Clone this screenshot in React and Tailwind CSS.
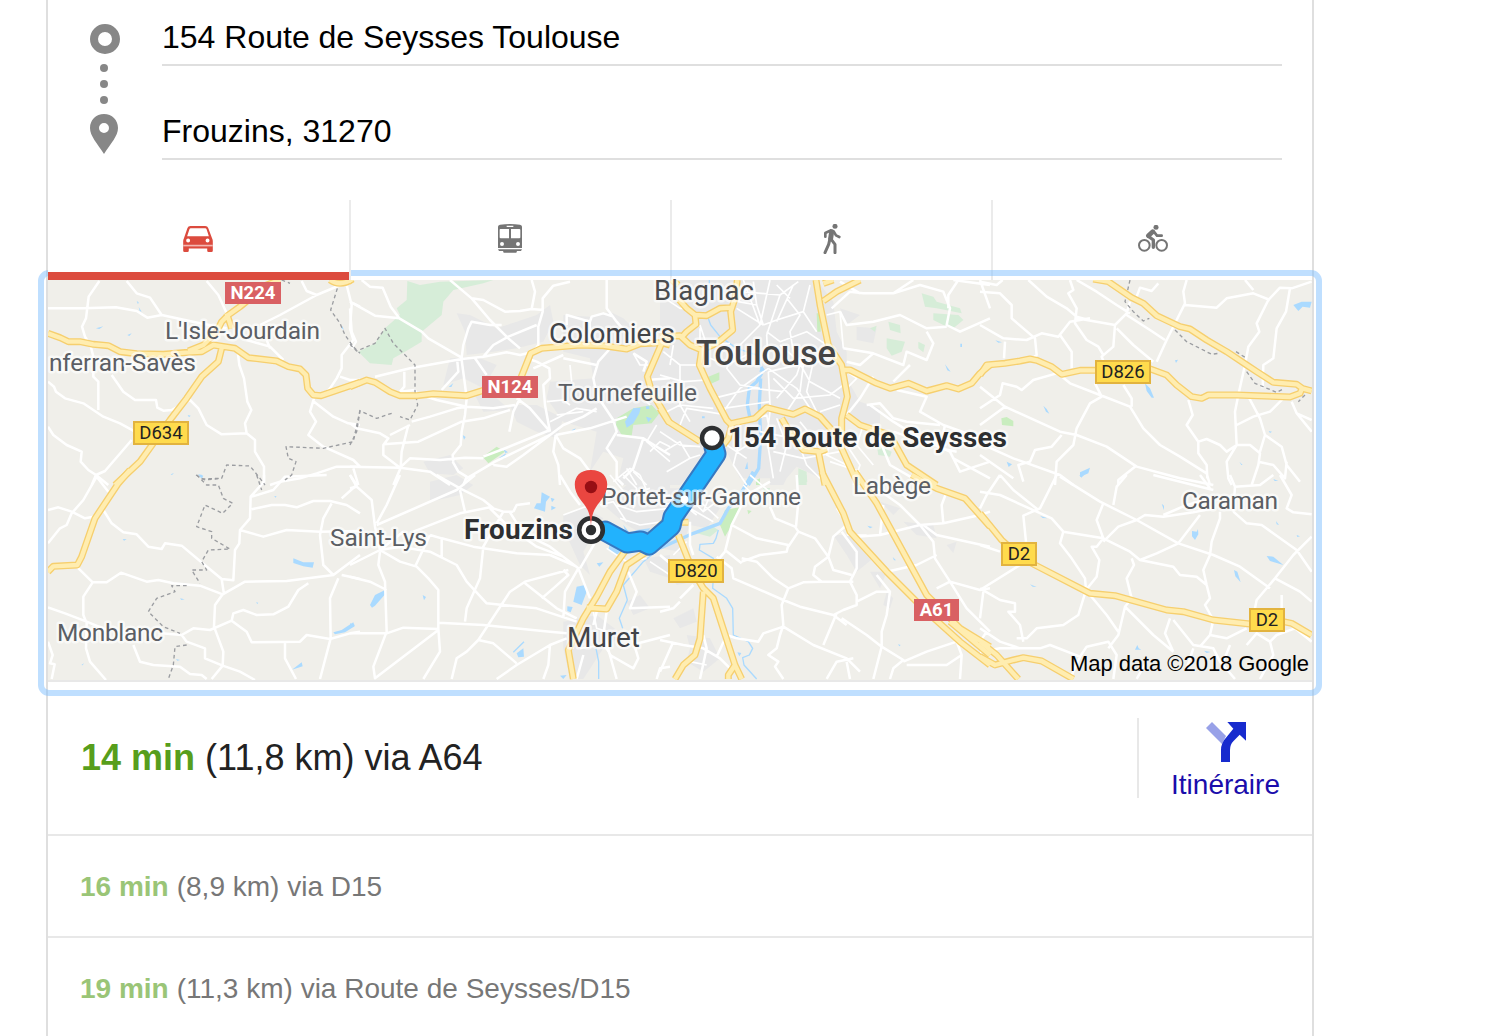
const sans = "font-['Liberation_Sans',Arial,sans-serif]";

// The map is cut in tiles. Every tile holds its own paths, drawn at three times
// the size of the page, and x / y give its top left corner.
const tiles = [
  {
    x: 40,
    y: 265,
    roads:
      "M24 130H130L228 127L290 138L322 158L365 150L480 175L560 190M178 48L146 95L138 160L126 185L135 215L152 243L160 275V335L175 350V435M260 48L290 85L330 98L365 150M500 48L535 90L560 145M660 180L720 150L830 90L930 48M785 48L800 78L830 90M24 350L42 365L48 380L75 400L130 415L190 455L240 475L285 500M215 330L250 380L285 405H348L352 428L370 437L395 435L450 405L475 430L500 480L545 508L620 505L645 525V560L672 605V660M24 485L40 510L80 540L125 560L122 590L145 615L168 630L205 660M155 660L168 630L195 618L275 525M592 250L598 300L612 340L622 410L634 435L615 475L620 505M620 225L690 245L730 285M680 225L690 250M920 60L935 120L930 190L940 225L905 270V310L890 340L870 370L850 390M900 335L930 345H960M940 115L960 125M822 400L810 440L828 470L805 510L850 545L940 585L960 605M822 410L880 455L925 475L960 480M690 660L720 650L780 640L830 625L890 605H960M940 610L955 660",
    main:
      "M24 205L60 218L85 230H120L160 238L205 242L240 260L290 266L370 268L445 262L485 260L520 240L585 250L625 278L710 288L745 305L780 312L798 330L803 370L820 390L843 392L960 352M445 258L490 240L530 200L545 170L565 150L600 125L680 60L720 45M560 145L575 190M545 250L535 290L485 335L440 400L390 465L300 590L225 660M870 45Q900 66 938 42",
    border:
      "M892 70L872 135L900 175L915 210L940 245L960 265M960 435L940 530L850 550L738 545L745 580L768 590L755 630L735 645M468 630L495 645L545 640L560 600L630 603L660 640L675 660M725 45L750 55",
    water:
      "M290 108L296 112L294 118ZM296 126L305 140L299 138ZM168 190L190 184L178 192ZM262 210L275 205L268 213ZM443 450L452 452L447 457ZM392 628L402 624L396 630ZM474 628L488 630L484 640ZM906 182L912 195L905 190Z",
  },
  {
    x: 350,
    y: 265,
    urban:
      "M320 145L360 150L440 190L500 170L560 150L600 120L610 170L580 230L500 250L430 260L350 270L345 200ZM300 280L380 275L440 300L400 370L340 340L280 360ZM370 380L440 400L480 435L400 440ZM480 420L560 420L640 460L620 520L560 500L500 470ZM640 150L720 155L780 140L820 160L860 200L960 260V660H800L820 580L760 560L720 620L740 500L640 470L590 400L600 350L730 340L720 280L640 260ZM220 590L300 570L340 610L310 630L240 625Z",
    wood:
      "M172 48L210 60L270 50L430 45L400 55L310 75L280 110L275 150L215 200V230L165 260L130 280L125 300L60 295L25 260L75 235L105 190L150 150L140 130L170 105Z",
    park:
      "M800 460L850 430L905 420L928 445L905 475L850 480L845 512L815 510L798 480ZM398 575L440 545L465 560L415 595Z",
    water:
      "M825 470L850 430L872 428L868 445L850 475L830 488ZM888 455L905 460L895 472ZM888 424H898V432H888ZM446 580L468 565L462 582ZM460 552L474 562L466 564ZM296 366L310 354L304 366ZM664 496L678 490L670 499ZM338 510L347 516L342 524Z",
    roads:
      "M0 110L75 152L148 160M35 45L60 65L98 68L122 125L148 160L215 200L235 220L335 278M0 130L5 200L18 230L5 250M75 335L180 310L335 282L400 275L470 262L510 270L545 262M300 45L365 100L420 165L475 220L510 250M365 100L400 105L465 140L510 138L545 132L580 135M545 45L555 80L545 132M660 50L610 62L578 100V140L565 185V240L550 260M335 278L340 240L355 190L365 170L420 180L455 180M400 275L430 240L475 215L560 180M335 285L345 360L350 400L345 450L335 500L332 540L308 570L310 590M322 290L325 320L275 375M375 280L410 330M163 320V365L150 380M150 380L195 375L200 385L260 405L350 425L430 430L495 420M510 400L490 440L478 500M350 425L320 430L240 455L185 470M0 475L20 490L90 505L115 520L100 540V570L150 608M120 510L180 480M100 538L205 530L335 470L400 460L480 435M175 480L155 560L152 608L130 660M0 605L150 608L180 580L270 585L345 578L400 580M150 608L240 620L300 660M600 500L540 430L500 400M350 640L435 590L600 510L640 480L700 455L740 430M340 660L350 635L325 620L308 590M600 500L585 420L580 360L600 340L598 310L560 290L545 285M430 600L470 605L520 570L600 510M400 575L460 552L600 495M617 510L720 490L830 455M617 510L610 560L625 600L630 660M617 510L640 550L690 580L720 620M770 45V130L800 170L830 205M650 180V150L720 170L725 155L760 145L790 155M790 240L745 290L730 340L740 390L790 465M640 280L740 300M550 310L640 270M850 265L890 290L880 320M890 345L960 340M790 465L800 500L770 550L800 590V640L820 660M800 510L880 520L960 570M880 520L850 610L820 640",
    streets:
      "M660 300L665 350M720 170L722 205M590 410L640 405L660 420M600 470L680 430L740 440M620 450L700 440M850 265L870 300L895 300M900 560L930 530L960 545M830 610L860 660M850 620L890 660M790 650L840 610L870 630M900 345L880 400L900 420M920 480L890 530L960 590",
    main:
      "M0 365L50 345L75 352L120 380L150 392H200L250 386L350 392L400 376M512 340L530 295L542 265L575 250L690 240L760 242L830 252L870 236L960 232M-5 50L5 42M935 235L892 335L905 380L960 475",
    border:
      "M0 238L20 258L75 235L105 190L130 235L160 265L195 300V380L203 420L180 465L150 455M125 445L80 460L30 438L20 500L0 540",
  },
  {
    x: 660,
    y: 265,
    urban:
      "M0 45H470L520 110L530 200L560 260V340L600 410L660 430V475L610 480L560 440L540 480L500 560L440 570L380 640H240L200 560L120 600L60 660H0ZM590 185L650 190L640 235L590 225ZM540 130L600 150L560 180ZM330 560L480 550V640L400 600L370 660H330Z",
    wood:
      "M785 85L820 95L830 110L900 130L905 145L830 130L795 125ZM820 145L895 150L910 165L880 190L850 180L820 165ZM685 170L720 180L722 205L690 195ZM680 220L735 230L725 260L695 272L680 250ZM775 230L795 240L790 262L775 250ZM630 190L650 182L645 200ZM415 610L440 620L440 660H415ZM650 540L695 560L690 575L655 570ZM735 600L755 595L745 612Z",
    park: "M470 145H482V200H472ZM145 335L178 322L178 345L150 358ZM288 645L300 640V660H288Z",
    water:
      "M855 298L872 320L862 316ZM901 236H906V246H901ZM126 454H134V460H126ZM298 320L305 300L318 320ZM255 612L262 590L264 612Z",
    river: "M148 45V110M143 155L152 180L180 215L230 250L290 270L305 315",
    riverWide: "M305 325L290 350L268 370L262 420L272 470M302 340L298 420L302 520L296 610L265 660",
    roads:
      "M515 130L570 80L610 85H700L760 45M540 50L600 85M700 85L780 60L850 80L870 130L860 180L900 200L990 160M895 45L865 90V130M540 140L560 180L640 170L720 150L800 190L860 185M550 250L640 265L730 300L740 260L800 285L820 235L800 200M640 265L600 300L560 290M640 335L600 400L560 450M710 375L800 395L780 440L850 480L990 530M630 420L700 470L780 520L870 560L900 620L990 590M880 45L990 60M960 45L990 130M700 500L760 520L860 540M640 480L690 600L760 640M750 300L700 350M855 480L840 550L890 560M620 420L660 415L700 460L740 470L840 480M870 560L880 580L990 640",
    streets:
      "M250 45L300 180M280 50L290 120L310 180M330 45L300 180M415 50L360 90L330 180L320 210M400 60L350 170M430 140L350 165L310 180M230 130L310 180M245 80L360 90M260 70L235 110L290 120M240 240L300 180M320 200L360 230L440 200L500 240M380 100L420 150L390 200L400 260M450 60L430 140L470 200M350 60L390 100M320 210L325 300M325 310L240 370L190 440M325 310L410 370L450 430M325 320L330 420M400 260L450 350L540 400M325 320L460 290L530 290M360 240L430 300L420 380L380 440M260 270L200 300L150 280M230 240L200 310L240 360L300 370M160 400L280 370L370 380M190 430L260 420L330 410M340 340L400 400L510 390L550 360M440 240L410 330L350 400M460 290L440 380L470 440M0 90L60 130L90 130M10 260L60 300L120 300M0 330L70 350L140 345M40 240L30 300M60 300L60 420L90 470M20 440L60 420L160 430M120 190V230M120 180L140 240L210 235M60 480L80 430L140 440L200 450M0 500L60 540L120 545M10 560L60 530L90 580M20 620L90 580L120 570M240 480L320 450L330 500L230 560M330 440L320 520L340 640M350 460L380 540L360 620M300 500L400 520L440 500L530 500M400 490L440 600L480 640M340 560L430 580L540 560M520 490L500 570L560 600M560 540L600 600L580 660M420 470L460 520L470 560M480 440L540 420M560 320L590 340L560 370M500 150L540 140L550 250M240 520L220 600L260 660M200 540L260 580M510 590L600 620M610 480L590 540L640 600",
    main:
      "M35 45L55 60M58 105L80 130L105 150L108 178L80 200L62 220M105 150L140 152L180 130L215 128M232 45L225 100L212 140L218 195L170 235L130 252M0 232L30 240M0 215L60 212L90 240L125 255L118 300L150 370L200 465L215 480L205 520L190 540M215 475L285 460L320 428L400 448L435 432L480 455L520 500L545 550L595 660M468 45L480 120L505 240L545 300L562 395L545 460V550M490 108L530 80L600 45M490 55L520 45M550 315H570L650 355L690 370L745 355L800 378L860 362L895 372L935 355L960 325L990 300M560 450L600 480L690 510L740 600L830 660M365 460L400 520L430 555L480 560L500 552M475 560L495 660M0 430L25 470L120 530",
  },
  {
    x: 980,
    y: 265,
    roads:
      "M0 80L60 85L95 120V160L165 220L170 270L150 285M68 45L50 60L0 50M145 45L200 95L260 130L290 155L325 165M270 45L280 75L265 85L290 130L285 175L320 225L355 245L370 270M290 45L350 80L410 120L450 145M450 110L440 145L405 180L290 160M0 180L70 220L140 225L185 205L235 215L270 170L330 160M75 230L72 280M240 210L275 260V310M535 55L515 78L480 68L470 95M405 180L400 245L365 275L375 300M410 190L460 240L520 290M440 150L510 195L555 225M620 45L610 80L615 115L590 165L560 225L530 290M615 120L710 128L740 100L820 85L870 105M795 45L820 75M995 50L935 70L900 68L865 105L830 175L838 200L805 245L795 300L775 390L765 440L770 540L740 590L745 640L755 660M930 70L918 140L890 190L880 280L850 300L848 370M0 430L60 390L68 355L110 365L125 375L160 345L230 325M240 330L270 355L360 390L450 425L490 490L540 540L600 575L680 625L690 660M345 355L365 395L330 415L290 490L280 540L230 590L225 660M430 360L455 400V425M0 365L75 425L240 500L290 510L380 545L470 605L600 640L700 660M75 425L0 480M245 510L215 545L165 555L150 590L115 600L130 650M0 535L100 580L240 630L280 660M0 570L100 640M465 605L415 645V660M625 405L638 450L620 480L655 530V565L680 600L682 640M655 530L680 522L720 540L740 560L770 540H810L840 565L835 600L815 660M808 400L840 460L855 510L905 545L920 600L960 650M770 480L820 455L870 440L910 400M935 410L950 445L995 500M950 445L995 465M855 510L840 560M835 590L880 600L915 640L920 590",
    main:
      "M0 330L20 300L75 295L120 288L150 282L170 286L215 305L245 328L300 316H350M505 310L560 330L590 360L635 395L665 400L685 390L770 390L930 396L960 385L966 370L995 378M340 42L385 50L455 98L490 115L530 152L600 185L630 192L680 225L740 260L800 300L830 320L880 352L950 358L970 372",
    border:
      "M450 45L435 110L460 140L490 168L508 160M585 195L620 230L695 268L715 265M768 260L800 280M800 320L825 355L890 382L910 372M975 390L955 410",
    park: "M64 460L80 456L100 468V484L66 480Z",
    water:
      "M940 120L965 110H995L990 128L968 125L955 138ZM495 355L510 370L522 398L515 398L500 378ZM190 422L200 432L208 446L198 440ZM80 590L96 598L86 606ZM300 622L330 608L325 625L300 636ZM585 286L594 284L588 294ZM46 226L66 232L55 233ZM582 414L592 420ZM778 590L788 600L784 600ZM866 498L876 500L870 504ZM880 642L895 648L884 648Z",
  },
  {
    x: 40,
    y: 475,
    roads:
      "M24 105L55 97L95 110L135 130L160 125M24 205L60 160L80 150L95 115L130 75L170 5L205 50M190 105L215 145L250 172L290 178L325 215L365 222L375 205L425 212L480 258L545 312L580 316L585 225L598 205L600 165L630 130L632 65L672 20V0M635 65L700 45L735 5L860 0M635 103L695 90L735 90L770 97L820 78H870L920 90L960 115M600 165L670 185L740 165L840 170L960 168M110 275L158 322L200 322L243 293L320 320L355 315L400 325L480 332L548 358L615 320L740 318L880 300L960 240M158 322L130 365V420L140 445L138 520L150 560L198 615M24 397L75 415L140 440L200 465M280 510L300 560L340 570L420 575L450 597L485 600L500 612M548 358L525 390L522 455L550 530L548 572L515 612M545 312L552 358M365 475L425 480L460 460L510 465L575 437L580 415L610 405L650 420L700 418L745 395L775 345L805 325M425 480L440 500L495 520V550L548 572L600 590L645 615M575 437L620 470L635 502L780 500L800 480L870 492L930 475L960 470M735 505V550L768 612M875 85L850 130L840 180L850 270L880 300M895 310L870 370L872 490L840 612M905 300L930 305L960 312M24 500L38 540L30 565L44 568L35 612M930 0L950 30L905 70",
    main: "M24 290L40 274L112 270L125 245L165 130L235 25L270 -15",
    border:
      "M470 0L500 30L535 30L550 70L578 85L548 115L495 90L470 155L515 170V190L570 222L505 225L485 260L500 285L455 285L480 325M440 332L395 332L405 350L350 370L325 410L370 455L420 475M440 510L405 515L400 570L385 612M650 0L665 45M485 12L540 10",
    water:
      "M760 250L790 262L822 262L818 278L790 274L760 264ZM880 472L905 465L940 442L944 454L915 472L885 478ZM756 584L785 562L788 574ZM248 192L260 193L252 197ZM420 370L434 373L424 375ZM703 63L710 64L706 68ZM648 382L655 383L652 387ZM408 552L420 555L412 557ZM124 570L132 565L128 571ZM476 2L490 2L486 10Z",
  },
  {
    x: 350,
    y: 475,
    urban:
      "M240 20L320 0L370 30L330 60L240 80ZM640 120L700 95L760 130L740 160L700 230L720 300L690 270L640 160ZM760 90L830 30L960 20V140L900 190L830 150ZM640 440L740 420L820 480L760 520L700 612H660L640 520ZM830 380L870 360L900 400L850 420ZM880 250L960 240V310L900 290Z",
    water:
      "M575 52L600 65L588 80L585 110L552 100L560 85H572ZM602 68L614 72L606 82ZM604 92L618 98L604 106ZM680 335L705 330L710 350L695 390L670 380ZM652 394L668 396L662 412L652 408ZM60 390L75 360L105 345L108 355L75 392L66 398ZM500 535L520 520L522 545L505 547ZM0 445L15 450L0 460ZM218 360L228 366L222 376ZM630 602L650 600L640 612ZM780 205L830 215L800 240L775 225ZM820 150L840 175L860 165L900 160L890 185L850 180L830 180ZM740 265L760 262L748 275Z",
    river: "M960 195L880 260L820 330L832 375L808 430L818 460M738 520L746 560V612M490 532L522 500",
    roads:
      "M0 40L20 35L65 75L75 155L90 225M0 0L20 35M150 0L110 90L80 145M90 225L160 170M80 150L320 45L375 0M260 0L330 40L400 75L430 100M0 270L90 225L150 260L200 275L235 310L265 345V460L270 530L220 612M90 225L150 215L240 230L320 270L350 320L410 385L560 400L680 440M90 230L85 270L105 320L110 470L70 575L75 610L265 465M0 305L60 320L110 345M0 475H110L160 458L265 462M240 180L275 190V245M275 190L370 215L500 235L600 240M240 180L195 275M190 170L330 115L420 97L460 110H490M460 110L400 215L390 310L350 400L345 440M330 45L345 110M265 443L400 450L600 470L650 475M655 285L525 320L480 350L385 495L350 530L320 550L305 612M525 325L620 400L680 430M480 112L520 175L600 215L685 280L720 370M420 100L470 150L560 215L640 245M490 110L500 90L540 85M685 280L645 350L640 430M650 490L600 510L595 570L580 612M575 370L610 340L655 300L640 285M600 240L680 275M385 495L430 505L500 565M440 612L500 570L600 510M760 160L690 280M630 0L660 50L690 90M835 290L860 350L840 400L960 395M740 410L730 450M770 410L760 480L780 540L850 580L865 550L850 500L865 505L960 480M760 470L800 612M700 540L680 612M920 612L930 580L960 575",
    streets:
      "M780 0L830 60L900 40M800 90L860 110L960 100M810 130L870 150L940 140M750 90L790 80L830 140M820 0L860 40L850 100M870 0L900 70L960 60M640 120L720 90M770 220L830 260L890 250M900 260L960 300M730 410L740 460L770 470M690 520L760 510L790 550",
    main:
      "M710 398L770 402L800 350L830 270L905 220M835 215L780 290L740 365L700 430L655 525L670 612M900 180L960 125",
  },
  {
    x: 660,
    y: 475,
    urban:
      "M0 40L120 40L180 100L140 160L90 150L60 230L0 220ZM520 180L580 180L620 210L640 250L590 290L560 240ZM630 290L680 290L660 340ZM680 350L700 370L690 400L670 390ZM80 480L150 490L180 550L130 590L80 560L90 520ZM40 430L100 400L110 440L60 460ZM730 140L820 150L830 190L770 180ZM860 210L890 200L880 235ZM660 80L720 100L700 120ZM0 250L60 260L100 320L50 330Z",
    wood: "M310 38L330 40L328 60L312 55ZM415 0H440L442 20L420 25ZM110 175L160 155L175 165L150 185ZM285 60H300V70H285Z",
    park: "M195 105L245 95L215 150L195 185L180 150ZM262 105L275 108L265 118Z",
    water:
      "M622 152L638 156L630 160ZM698 246L708 256L702 256ZM366 228L372 230L368 234ZM714 508L722 510L718 514ZM232 532L244 534L238 544Z",
    river:
      "M175 165L168 190L160 205L120 208L118 225L160 250L162 275L158 340L200 370L218 400L220 480L265 500L278 520L268 540L248 548L252 570L290 612",
    riverWide: "M280 -10L240 60L205 100L180 145L100 175L0 220",
    roads:
      "M215 150L290 190L385 210L380 230L300 240L245 260M330 20L260 60L215 150L195 230L170 260M195 225L245 265M245 250L290 260L340 310L385 340L430 322L485 320L580 320M330 95L345 130L405 155L415 170L385 215M410 0L415 80L408 155M415 170L465 190L505 245L465 275L460 300L485 320M505 245L520 185L560 150M545 170L590 230V280L570 320L590 360V390L550 405L520 420M505 245L520 285L575 300M170 245L215 280L220 310L290 340L370 375L420 395L520 420L560 450M385 340L365 390L370 450L360 480L350 520L325 540L355 560L345 575L370 612M370 455L310 475L295 500L230 490M370 455L460 510L560 550L600 590M530 415L490 510M545 430L620 480L665 515L640 612M665 515L730 555L700 580L690 612M730 560L800 530L890 500L905 540L860 570L740 570M590 380L650 350L690 350L680 420L665 470V515M650 300L690 350M680 290L770 270L830 240M590 185L660 180L780 150L850 145L960 120L990 110M650 40L720 90L780 150L820 200L825 250L870 320L960 345L990 340M790 150L830 180L990 215M670 90L660 180M850 145L845 90L860 50M870 320L920 400L990 470M830 340L870 320M905 540L900 612M970 350L960 430M0 240L60 290M60 380L40 400L0 410M60 370L100 330M0 495L70 510L130 520L180 550L220 590M130 480L140 520L120 612M170 545L200 480L230 490M0 590L40 500M90 140V210L100 240M560 560L570 612M500 612L530 560L580 550",
    streets:
      "M90 100L160 140M120 80L175 130M80 60L130 110L170 80M0 90L60 80L110 120M150 60L130 110M250 30L290 70M340 60L390 80M270 0L340 60M530 100L560 150M700 30L740 70L780 60M560 180L620 180M90 560L140 570M80 200L40 240",
    main:
      "M485 -10L550 115L570 170L680 290L800 410L900 500L990 570M585 -10L650 85L800 360L900 460L990 515M870 440L990 540M755 0L830 40L915 70L990 155M65 142H85M55 180L85 255L100 290L130 340L160 370L225 570L245 612M130 350L120 490L105 540L70 570L45 612M225 570L205 600V612",
  },
  {
    x: 980,
    y: 475,
    roads:
      "M0 50L60 60L170 110M230 0L180 100L130 122L138 200M60 0L100 45L175 105M0 100L20 60L60 0M240 5L360 80L470 135L595 205L700 240L780 275L870 340M170 110L215 130L250 170L240 205L275 250L315 310L318 345M250 170L370 190L450 230L480 255L580 275L600 300L650 305L680 330M440 0L410 35L400 90M370 85L350 135L370 190L350 215H335L358 255L350 305L318 345M470 135L415 155L370 200M470 135L495 120L550 125L640 112L700 100M550 120L620 90L700 70M720 110V130L695 200L690 240L670 285L680 330L690 370L675 390L700 435L690 480L660 515M520 0L700 45M660 0L690 40M760 110L800 145L845 150L950 225L995 290M595 205L660 120M480 255L530 235L595 205M455 250L462 270L440 310L455 370L435 395L415 480L385 520M435 395L520 480L580 530M995 185L940 240L885 310L830 375L825 400M885 310L960 350L995 380M905 360V400M315 355L295 420L250 450L170 460L140 490H110M0 340L60 375L105 385V410H85L120 450L130 500M0 345L120 270M0 210L60 230M0 460L60 500L120 520M330 360L380 420L415 470M20 470L0 500M0 530L60 520L180 520L210 510L300 545L320 515L385 500L410 540L400 612M570 430L555 475L580 530M580 435L640 510L700 520L720 560L765 612M690 480L740 490L800 460M800 510L830 475L870 500L880 540L840 612M870 500L890 480L945 460L995 500M900 0L935 60L920 100L940 112L995 118M750 0L765 35L760 110M765 35L840 30L880 0M300 545L270 612M640 520L620 580M500 560L470 612M750 510L730 560",
    main:
      "M0 115L65 195L120 245L165 270L330 355L405 362L560 405L610 410L700 435L810 447M910 440L935 445L995 480M0 500L50 540L115 612M0 545L45 570L100 555L130 548L185 558L280 612",
    water:
      "M636 168L650 170L654 162L655 178L645 195L636 184ZM860 243L880 245L910 270L870 258ZM762 285L772 290L782 322L766 304ZM545 86L552 92V106ZM180 122L202 130L188 129ZM150 328L170 336L158 335ZM888 138L897 150L890 148ZM950 180L960 184L952 186ZM472 510L476 520L484 524L465 524ZM672 527L692 531L680 534ZM686 176L694 180ZM298 0H312L304 8Z",
  },
];

const layers = [
  { key: "urban", fill: "#e8e8e8" },
  { key: "wood", fill: "#d6edd8" },
  { key: "park", fill: "#c9edbf" },
  { key: "water", fill: "#aadaff" },
  { key: "river", stroke: "#aadaff", width: 4 },
  { key: "riverWide", stroke: "#aadaff", width: 10 },
  { key: "streets", stroke: "#ffffff", width: 5 },
  { key: "roads", stroke: "#ffffff", width: 7.5 },
  { key: "border", stroke: "#9b9da1", width: 4, dash: "11 9" },
  { key: "main", stroke: "#f6cf6e", width: 21 },
  { key: "main", stroke: "#ffedb0", width: 13 },
];

const towns = [
  { name: "Toulouse", x: 696, y: 365, w: 140, size: 34.5, weight: 500, color: "#454545" },
  { name: "Blagnac", x: 654, y: 300, w: 100, size: 27.5, color: "#4a4c50" },
  { name: "Colomiers", x: 549, y: 343, w: 126, size: 28, color: "#424448" },
  { name: "L'Isle-Jourdain", x: 165, y: 339, w: 155, size: 24.5 },
  { name: "nferran-Savès", x: 49, y: 371, w: 147, size: 24.5 },
  { name: "Tournefeuille", x: 558, y: 401, w: 139, size: 24.5 },
  { name: "Portet-sur-Garonne", x: 601, y: 505, w: 200, size: 24.5 },
  { name: "Labège", x: 853, y: 494, w: 78, size: 24.5 },
  { name: "Caraman", x: 1182, y: 509, w: 96, size: 24.5 },
  { name: "Saint-Lys", x: 330, y: 546, w: 97, size: 24.5 },
  { name: "Monblanc", x: 57, y: 641, w: 106, size: 24.5 },
  { name: "Muret", x: 567, y: 647, w: 73, size: 28, color: "#424448" },
  { name: "Frouzins", x: 464, y: 539, w: 109, size: 28, weight: 700, color: "#2d2f31" },
  { name: "154 Route de Seysses", x: 728, y: 447, w: 279, size: 28, weight: 700, color: "#2d2f31" },
];

const shields = [
  { label: "N224", x: 225, y: 282, w: 56, red: true },
  { label: "N124", x: 482, y: 376, w: 56, red: true },
  { label: "A61", x: 914, y: 599, w: 45, red: true },
  { label: "D634", x: 133, y: 421, w: 56 },
  { label: "D826", x: 1095, y: 360, w: 56 },
  { label: "D820", x: 668, y: 559, w: 56 },
  { label: "D2", x: 1001, y: 542, w: 36 },
  { label: "D2", x: 1249, y: 608, w: 36 },
];

const ROUTE = "M714 447L716 454L686 498L673 517L671 526L649 545L641 541L627 543L605 531";

function Shield({ label, x, y, w, red }) {
  return (
    <g>
      {red ? (
        <rect x={x} y={y} width={w} height="22" fill="#d96063" />
      ) : (
        <rect x={x + 1} y={y + 1} width={w - 2} height="22" fill="#ffdb4d" stroke="#e2b33f" strokeWidth="2" />
      )}
      <text
        x={x + w / 2}
        y={red ? y + 17 : y + 18}
        textAnchor="middle"
        fontSize={red ? 18.5 : 18.5}
        fontWeight={red ? 700 : 400}
        fill={red ? "#ffffff" : "#222222"}
      >
        {label}
      </text>
    </g>
  );
}

function RouteMap() {
  return (
    <svg
      viewBox="48 280 1264 400"
      className="block h-[400px] w-full overflow-visible bg-[#f0efea] font-['Roboto',sans-serif]"
    >
      {/* the ground is clipped to the frame, the labels are not */}
      <svg x="48" y="280" width="1264" height="400" viewBox="48 280 1264 400">
        {layers.map((layer, i) =>
          tiles.map((tile) =>
            tile[layer.key] ? (
              <path
                key={`${i}-${tile.x}-${tile.y}`}
                d={tile[layer.key]}
                transform={`translate(${tile.x} ${tile.y}) scale(0.33333)`}
                fill={layer.fill || "none"}
                stroke={layer.stroke}
                strokeWidth={layer.width}
                strokeDasharray={layer.dash}
                strokeLinejoin="round"
              />
            ) : null
          )
        )}
      </svg>

      <g fill="none" strokeLinejoin="round" strokeLinecap="round">
        <path d={ROUTE} stroke="#3679c2" strokeWidth="21" />
        <path d={ROUTE} stroke="#22b2fd" strokeWidth="17" />
      </g>

      {towns.map((t) => (
        <text
          key={t.name}
          x={t.x}
          y={t.y}
          textLength={t.w}
          fontSize={t.size}
          fontWeight={t.weight || 400}
          fill={t.color || "#5b5e64"}
          stroke="#ffffff"
          strokeOpacity="0.65"
          strokeWidth="5"
          strokeLinejoin="round"
          paintOrder="stroke"
        >
          {t.name}
        </text>
      ))}
      <circle cx="684.5" cy="499.500" r="4" fill="#ffffff" />

      {shields.map((s) => (
        <Shield key={`${s.label}-${s.x}`} {...s} />
      ))}

      <circle cx="712" cy="438" r="10" fill="#ffffff" stroke="#2d2f31" strokeWidth="4.5" />
      <circle cx="591" cy="530" r="11.8" fill="#ffffff" stroke="#2d2f31" strokeWidth="4.6" />
      <circle cx="591" cy="530" r="5.2" fill="#2d2f31" />
      <path
        d="M591 526C590 510 586 507 580 499C571 487 573 470 591 470C609 470 611 487 602 499C596 507 592 510 591 526Z"
        fill="#ea4640"
      />
      <circle cx="591" cy="487" r="6.2" fill="#960f14" />

      <text
        x="1070"
        y="671"
        textLength="239"
        fontSize="22"
        fill="#000000"
        className="font-['Liberation_Sans',Arial,sans-serif]"
      >
        Map data ©2018 Google
      </text>
    </svg>
  );
}

function CarIcon() {
  return (
    <svg viewBox="0 0 90 79" className="h-[26px] w-[30px]">
      <path
        fill="#dc4b3e"
        fillRule="evenodd"
        d="M13 6Q15 0 22 0H67Q74 0 76 6L88 38Q90 42 90 46V75Q90 79 86 79H77Q73 79 73 75V68H17V75Q17 79 13 79H4Q0 79 0 75V46Q0 42 2 38ZM23 7Q20 7 19 10L12 31H78L71 10Q70 7 67 7ZM15 38A6 6 0 1 0 15 50A6 6 0 1 0 15 38ZM74 38A6 6 0 1 0 74 50A6 6 0 1 0 74 38Z"
      />
      <path d="M0 59.500H90" stroke="#f3b8b2" strokeWidth="5" />
    </svg>
  );
}

function TrainIcon() {
  return (
    <svg viewBox="0 0 72 87" className="h-[29px] w-6">
      <path
        fill="#757575"
        fillRule="evenodd"
        d="M0 8Q0 3 6 2Q36 -2 66 2Q72 3 72 8V72H0ZM26 5V9H46V5ZM7 15Q5 15 5 18V40Q5 43 8 43H33V15ZM39 15V43H64Q67 43 67 40V18Q67 15 64 15ZM12 54A6 6 0 1 0 12 66A6 6 0 1 0 12 54ZM60 54A6 6 0 1 0 60 66A6 6 0 1 0 60 54Z"
      />
      <path fill="#757575" d="M0 76H72L69 81H57L55 86H17L15 81H3Z" />
    </svg>
  );
}

function WalkIcon() {
  return (
    <svg
      viewBox="0 0 52 90"
      className="h-[30px] w-[18px]"
      fill="none"
      stroke="#757575"
      strokeLinejoin="round"
      strokeLinecap="round"
    >
      <circle cx="35" cy="7" r="7.500" fill="#757575" stroke="none" />
      <path strokeWidth="8" d="M22 19L6 27V38M31 22L38 34L48 39" />
      <path strokeWidth="15" d="M25 23L22 43" />
      <path strokeWidth="9" d="M20 44L16 61L5 86M22 44L35 61V86" />
    </svg>
  );
}

function BikeIcon() {
  return (
    <svg
      viewBox="0 0 90 81"
      className="h-[27px] w-[30px]"
      fill="none"
      stroke="#757575"
      strokeLinejoin="round"
      strokeLinecap="round"
    >
      <circle cx="54" cy="7" r="7.500" fill="#757575" stroke="none" />
      <circle cx="19" cy="61" r="16" strokeWidth="6" />
      <circle cx="71" cy="61" r="16" strokeWidth="6" />
      <path strokeWidth="14" d="M44 20L31 32" />
      <path strokeWidth="8" d="M47 19L57 32H71" />
      <path strokeWidth="10" d="M30 33L46 45V67" />
    </svg>
  );
}

function DirectionsIcon() {
  return (
    <svg viewBox="0 0 120 120" className="h-10 w-10 shrink-0">
      <path d="M0 18L18 0L60 42L48 66Z" fill="#98a1e8" />
      <path d="M45 120V84Q45 62 60 47L82 20L64 0H120V56L101 38L82 58Q72 68 72 84V120Z" fill="#172bce" />
    </svg>
  );
}

function Waypoints() {
  return (
    <svg viewBox="0 0 30 130" className="h-[130px] w-[30px] shrink-0" fill="#878787">
      <circle cx="15" cy="15" r="11" fill="none" stroke="#878787" strokeWidth="8" />
      <circle cx="14" cy="44" r="4" />
      <circle cx="14" cy="60" r="4" />
      <circle cx="14" cy="76" r="4" />
      <path
        fillRule="evenodd"
        d="M14 90C6 90 0 96 0 104C0 112 7 119 14 130C21 119 28 112 28 104C28 96 22 90 14 90ZM14 99A5 5 0 1 1 14 109A5 5 0 1 1 14 99Z"
      />
    </svg>
  );
}

const modes = [
  { id: "train", icon: TrainIcon, className: "w-[321px] border-r-2 pr-px pb-[3px]" },
  { id: "walk", icon: WalkIcon, className: "w-[321px] border-r-2 pl-px pb-[2px]" },
  { id: "bike", icon: BikeIcon, className: "w-[319px] pl-px pb-[3px]" },
];

function ModeTabs() {
  return (
    <div className="flex h-20">
      <button className="relative z-10 flex w-[303px] border-r-2 border-[#ebebeb] bg-white">
        <span className="flex h-20 w-full items-center justify-center border-b-8 border-[#dc4b3e] pt-[6px] pr-px">
          <CarIcon />
        </span>
      </button>
      {modes.map((mode) => (
        <button key={mode.id} className={`flex items-center justify-center border-[#ebebeb] ${mode.className}`}>
          <mode.icon />
        </button>
      ))}
    </div>
  );
}

const alternatives = [
  { time: "16 min", detail: "(8,9 km) via D15" },
  { time: "19 min", detail: "(11,3 km) via Route de Seysses/D15" },
];

export default function App() {
  return (
    <div className={`h-[1036px] overflow-hidden bg-white ${sans}`}>
      <div className="ml-[46px] h-full w-[1268px] border-x-2 border-[#dfdfdf]">
        <div className="flex h-[200px] gap-[42px] pl-[42px] pt-6">
          <Waypoints />
          <div className="-mt-6 w-[1120px] text-[32px] text-black">
            <div className="flex h-[66px] items-end border-b-2 border-[#dfdfdf] pb-[7px] leading-10">
              154 Route de Seysses Toulouse
            </div>
            <div className="flex h-[94px] items-end border-b-2 border-[#dfdfdf] pb-[7px] leading-10">
              Frouzins, 31270
            </div>
          </div>
        </div>

        <ModeTabs />

        <div className="h-[406px] rounded-[1px] outline-6 outline-offset-4 outline-[#7fbfff]/50">
          <RouteMap />
          <div className="h-[2px] bg-[#e8e8e8]" />
        </div>

        <div className="flex h-[150px] justify-between border-b-2 border-[#e8e8e8] pl-[33px]">
          <p className="pt-12 text-[36px] leading-12 text-[#222222]">
            <b className="text-[#579e1c]">14 min</b> (11,8 km) via A64
          </p>
          <a className="mt-8 flex h-20 w-[175px] flex-col items-center border-l-2 border-[#e8e8e8] pt-1 text-[28px] leading-8 text-[#1a0dab]">
            <DirectionsIcon />
            <span className="mt-[7px]">Itinéraire</span>
          </a>
        </div>

        {alternatives.map((alt) => (
          <p
            key={alt.time}
            className="flex h-[102px] items-center gap-2 border-b-2 border-[#e8e8e8] pl-8 pt-[2px] text-[28px] text-[#777777]"
          >
            <b className="text-[#9ac577]">{alt.time}</b>
            {alt.detail}
          </p>
        ))}
      </div>
    </div>
  );
}
